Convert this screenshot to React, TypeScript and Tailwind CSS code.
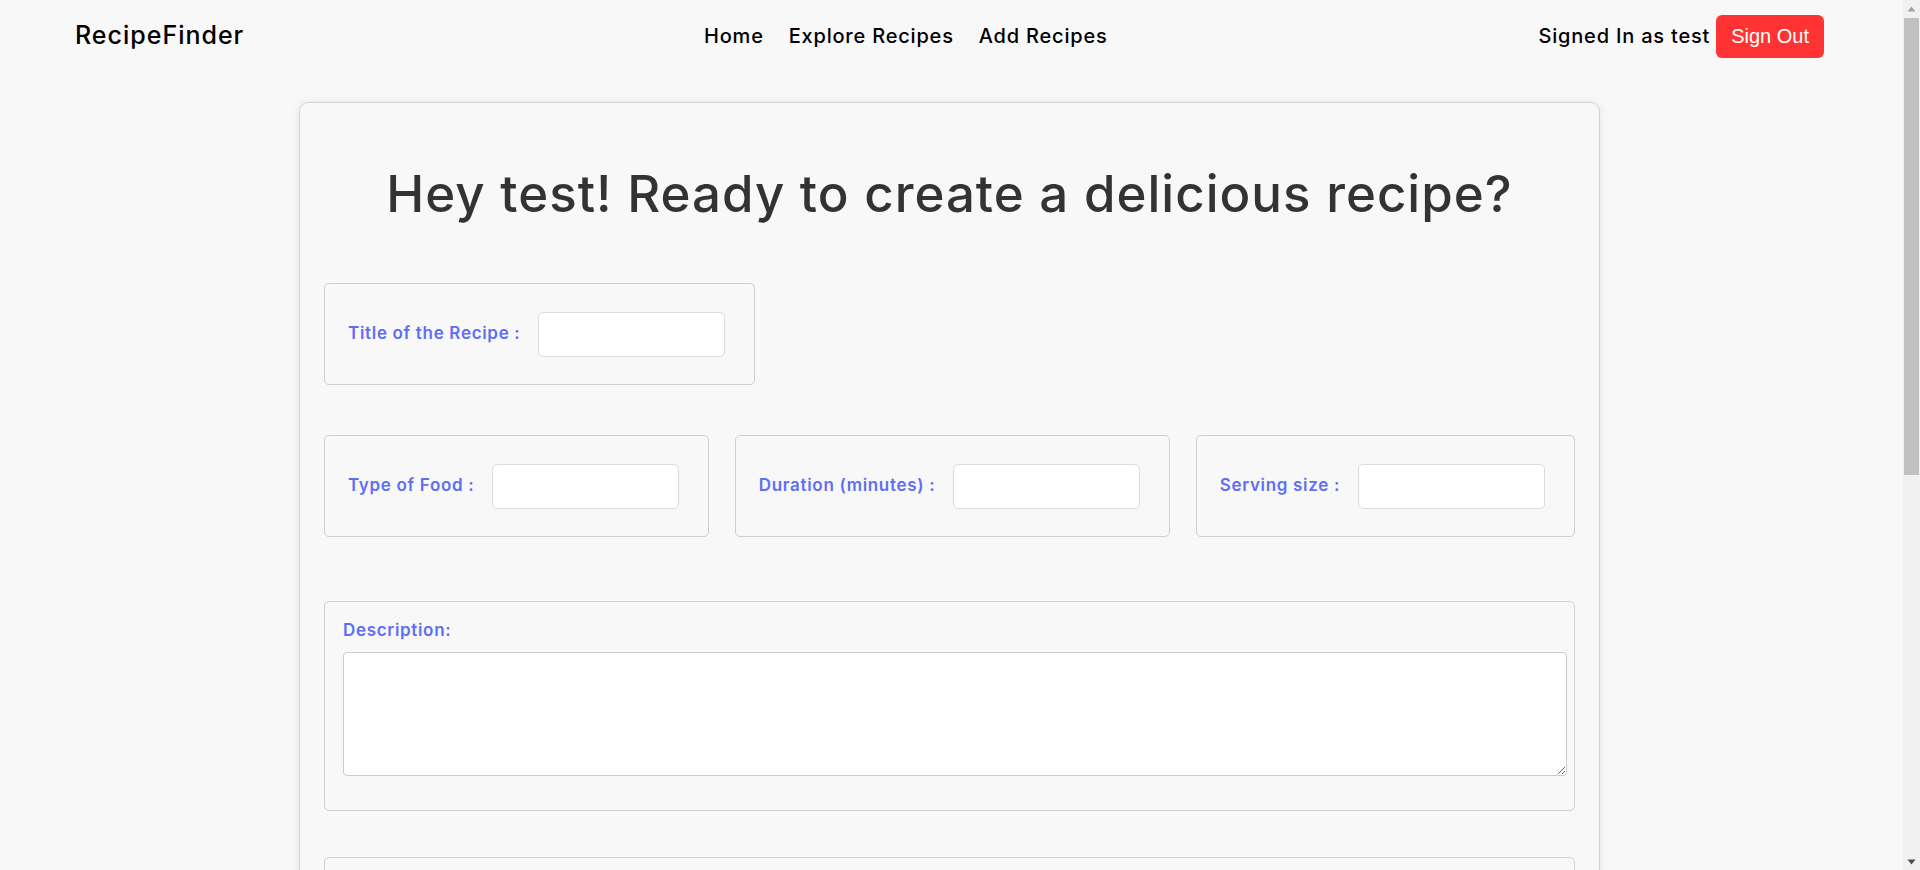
import React from "react";

const font = { fontFamily: "Inter, 'Noto Sans', sans-serif" };

function Field({ label, className = "" }: { label: string; className?: string }) {
  return (
    <div
      className={`flex items-center h-[102px] pl-[23px] pr-[29px] border border-[#cfcfcf] rounded-[5px] ${className}`}
    >
      <label className="text-[17px] tracking-[0.04em] font-semibold text-[#5f6ff5] mr-[18px] whitespace-nowrap">
        {label}
      </label>
      <input
        type="text"
        className="w-[187px] h-[45px] bg-white border border-[#dcdcdc] rounded-[5px] outline-none px-2"
      />
    </div>
  );
}

function ScrollBar() {
  return (
    <div className="fixed top-0 right-0 w-[17px] h-[870px] bg-[#f1f1f1] flex flex-col items-center">
      <div className="h-[17px] w-full flex items-center justify-center">
        <svg width="9" height="6" viewBox="0 0 9 6">
          <path d="M4.5 0.5 L8.5 5.5 L0.5 5.5 Z" fill="#a3a3a3" />
        </svg>
      </div>
      <div className="mt-[1px] w-[15px] h-[457px] bg-[#c1c1c1]" />
      <div className="mt-auto h-[17px] w-full flex items-center justify-center">
        <svg width="9" height="6" viewBox="0 0 9 6">
          <path d="M0.5 0.5 L8.5 0.5 L4.5 5.5 Z" fill="#505050" />
        </svg>
      </div>
    </div>
  );
}

export default function App() {
  return (
    <div className="min-h-screen bg-[#f8f8f8] text-black" style={font}>
      <div className="mr-[17px] pb-[60px]">
        <header className="flex items-center h-[72px] pl-[75px] pr-[79px]">
          <div className="w-[629px] text-[25px] tracking-[0.04em] font-medium">RecipeFinder</div>
          <nav className="flex gap-[25px] text-[20px] tracking-[0.04em] font-medium">
            <a>Home</a>
            <a>Explore Recipes</a>
            <a>Add Recipes</a>
          </nav>
          <div className="ml-auto flex items-center gap-[6px]">
            <span className="text-[20px] tracking-[0.04em] font-medium">Signed In as test</span>
            <button
              className="h-[43px] px-[15px] rounded-[6px] bg-[#ff3333] text-white text-[20px]"
              style={{ fontFamily: "'Liberation Sans', Arial, sans-serif" }}
            >
              Sign Out
            </button>
          </div>
        </header>

        <main className="w-[1301px] ml-[299px] mt-[30px] bg-[#f8f8f8] border border-[#d4d4d4] rounded-[9px] shadow-[0_0_8px_rgba(0,0,0,0.08)] px-[24px] pt-[60px] pb-[40px]">
          <h1 className="text-center text-[51px] tracking-[0.02em] leading-[1.2] font-medium text-[#333333]">
            Hey test! Ready to create a delicious recipe?
          </h1>

          <div className="mt-[59px] flex">
            <Field label="Title of the Recipe :" className="h-[101px]" />
          </div>

          <div className="mt-[50px] flex justify-between">
            <Field label="Type of Food :" />
            <Field label="Duration (minutes) :" />
            <Field label="Serving size :" />
          </div>

          <div className="mt-[64px] border border-[#cfcfcf] rounded-[5px] pl-[18px] pr-[7px] pt-[15px] pb-[34px]">
            <label className="block text-[17px] tracking-[0.04em] leading-[26px] font-semibold text-[#5f6ff5] mb-[9px]">
              Description:
            </label>
            <textarea className="block w-full h-[124px] bg-white border border-[#cccccc] rounded-[4px] outline-none p-2" />
          </div>

          <div className="mt-[46px] border border-[#cfcfcf] rounded-[5px] pl-[18px] pr-[7px] pt-[15px] pb-[34px]">
            <label className="block text-[17px] tracking-[0.04em] leading-[26px] font-semibold text-[#5f6ff5] mb-[9px]">
              Ingredients:
            </label>
            <textarea className="block w-full h-[124px] bg-white border border-[#cccccc] rounded-[4px] outline-none p-2" />
          </div>
        </main>
      </div>
      <ScrollBar />
    </div>
  );
}
